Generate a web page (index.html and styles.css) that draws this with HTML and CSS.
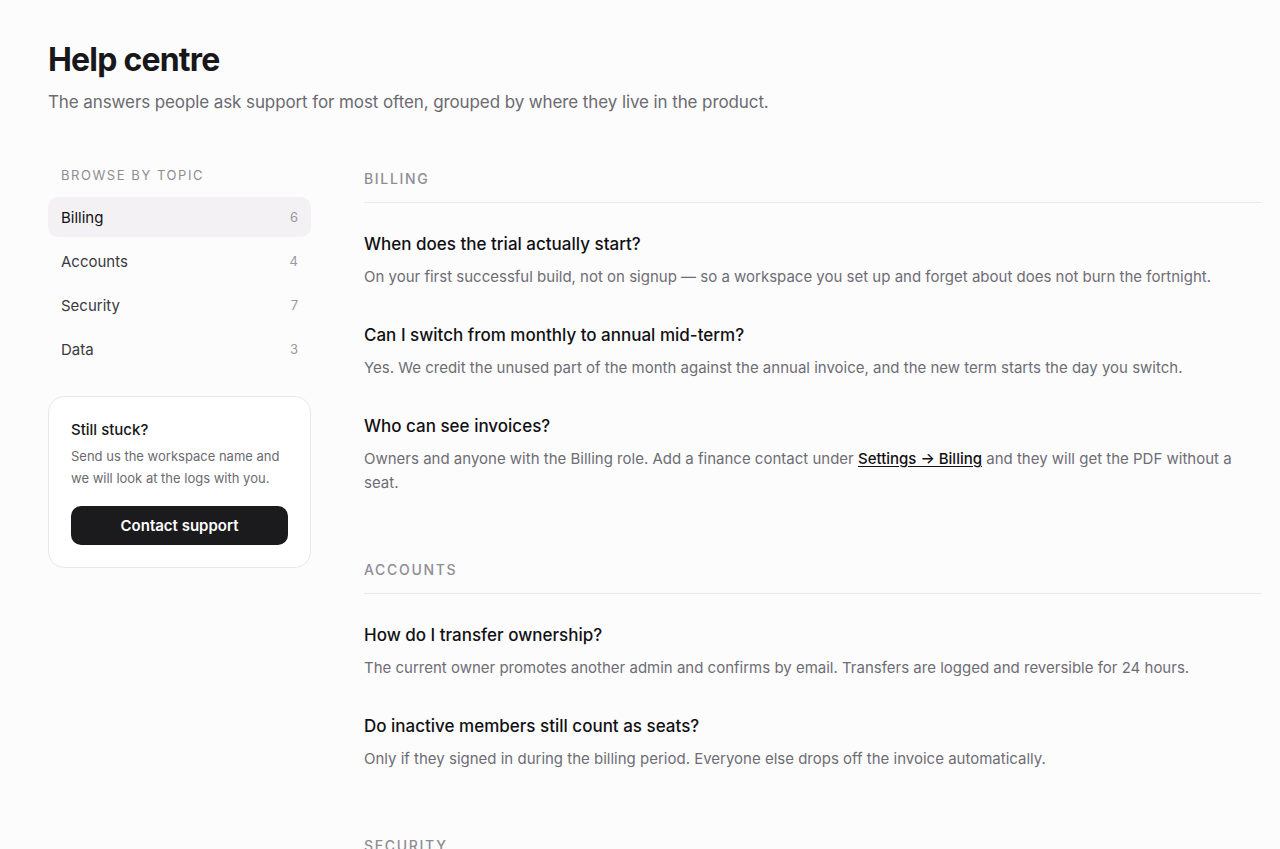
FILE: index.html
```html
<!DOCTYPE html>
<html lang="en">
  <head>
    <meta charset="UTF-8" />
    <meta name="viewport" content="width=device-width, initial-scale=1.0" />
    <title>Help centre</title>
    <link rel="stylesheet" href="styles.css">
  </head>
  <body>
    <div class="page">
      <header class="page-header">
        <h1>Help centre</h1>
        <p class="lede">The answers people ask support for most often, grouped by where they live in the product.</p>
      </header>

      <div class="layout">
        <aside class="sidebar">
          <div class="side-label">Browse by topic</div>
          <nav class="topics">
            <a class="topic active" href="#billing"><span>Billing</span><span class="count">6</span></a>
            <a class="topic" href="#accounts"><span>Accounts</span><span class="count">4</span></a>
            <a class="topic" href="#security"><span>Security</span><span class="count">7</span></a>
            <a class="topic" href="#data"><span>Data</span><span class="count">3</span></a>
          </nav>

          <div class="stuck">
            <div class="stuck-title">Still stuck?</div>
            <p class="stuck-text">Send us the workspace name and we will look at the logs with you.</p>
            <button class="btn" type="button">Contact support</button>
          </div>
        </aside>

        <main class="faq">
          <section class="group" id="billing">
            <h2>Billing</h2>
            <div class="item">
              <h3>When does the trial actually start?</h3>
              <p>On your first successful build, not on signup — so a workspace you set up and forget about does not burn the fortnight.</p>
            </div>
            <div class="item">
              <h3>Can I switch from monthly to annual mid-term?</h3>
              <p>Yes. We credit the unused part of the month against the annual invoice, and the new term starts the day you switch.</p>
            </div>
            <div class="item">
              <h3>Who can see invoices?</h3>
              <p>Owners and anyone with the Billing role. Add a finance contact under <a href="#">Settings → Billing</a> and they will get the PDF without a seat.</p>
            </div>
          </section>

          <section class="group" id="accounts">
            <h2>Accounts</h2>
            <div class="item">
              <h3>How do I transfer ownership?</h3>
              <p>The current owner promotes another admin and confirms by email. Transfers are logged and reversible for 24 hours.</p>
            </div>
            <div class="item">
              <h3>Do inactive members still count as seats?</h3>
              <p>Only if they signed in during the billing period. Everyone else drops off the invoice automatically.</p>
            </div>
          </section>

          <section class="group" id="security">
            <h2>Security</h2>
            <div class="item">
              <h3>Can I enforce single sign-on?</h3>
              <p>Yes, on the Business plan. Once SSO is required, password sign-in is switched off for everyone except owners.</p>
            </div>
          </section>
        </main>
      </div>
    </div>
  </body>
</html>
```

FILE: styles.css
```css
body {
  font-family: Inter, "Noto Sans", sans-serif;
  background: #fcfcfd;
  color: #18171a;
  margin: 0;
  padding: 0;
}

.page {
  padding: 40px 19px 0 48px;
}

.page-header h1 {
  font-size: 32px;
  line-height: 40px;
  font-weight: 700;
  letter-spacing: -0.025em;
  margin: 0 0 9px;
}

.lede {
  font-size: 17px;
  line-height: 26px;
  letter-spacing: -0.1px;
  color: #6b6a70;
  margin: 0;
}

.layout {
  display: grid;
  grid-template-columns: 263px 1fr;
  gap: 53px;
  margin-top: 52px;
}

/* sidebar */
.side-label {
  font-size: 13px;
  line-height: 16px;
  letter-spacing: 0.12em;
  text-transform: uppercase;
  color: #8e8d93;
  padding: 0 13px;
  margin-bottom: 14px;
}

.topics {
  display: flex;
  flex-direction: column;
  gap: 4px;
}

.topic {
  display: flex;
  justify-content: space-between;
  align-items: center;
  height: 40px;
  padding: 0 13px;
  border-radius: 10px;
  font-size: 15px;
  color: #3a393e;
  text-decoration: none;
}

.topic.active {
  background-color: #f3f1f4;
  color: #111013;
}

.topic .count {
  font-size: 13px;
  color: #9a999f;
}

.stuck {
  margin-top: 27px;
  border: 1px solid #e9e7eb;
  border-radius: 16px;
  background: #fff;
  padding: 22px;
}

.stuck-title {
  font-size: 15px;
  line-height: 22px;
  font-weight: 500;
  margin-bottom: 4px;
}

.stuck-text {
  font-size: 13px;
  line-height: 22px;
  color: #6b6a70;
  margin: 0 0 17px;
}

.btn {
  display: block;
  width: 100%;
  height: 39px;
  border: 0;
  border-radius: 10px;
  background-color: #1b1a1d;
  color: white;
  font-family: inherit;
  font-size: 15px;
  font-weight: 600;
  cursor: pointer;
}

/* faq */
.group {
  margin-bottom: 63px;
}

.group h2 {
  font-size: 14px;
  line-height: 20px;
  font-weight: 500;
  letter-spacing: 0.12em;
  text-transform: uppercase;
  color: #8e8d93;
  margin: 0;
  padding: 2px 0 13px;
  border-bottom: 1px solid #e9e8ea;
}

.item {
  margin-top: 29px;
}

.item + .item {
  margin-top: 34px;
}

.item h3 {
  font-size: 17px;
  line-height: 24px;
  font-weight: 500;
  color: #111013;
  margin: 0 0 9px;
}

.item p {
  font-size: 15px;
  line-height: 24px;
  color: #6e6d74;
  margin: 0;
}

.item p a {
  color: #111013;
  font-weight: 500;
  text-decoration: underline;
  text-underline-offset: 2px;
}
```
